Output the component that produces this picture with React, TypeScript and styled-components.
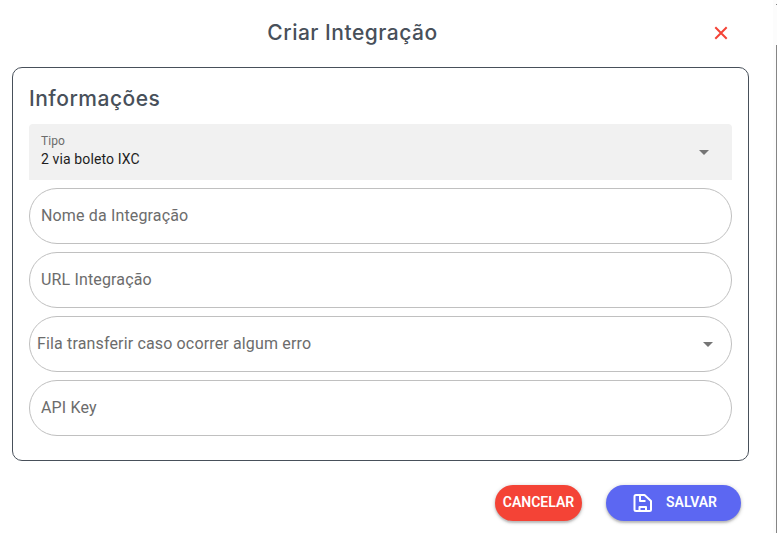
import React from "react";
import styled, { createGlobalStyle } from "styled-components";

const Global = createGlobalStyle`
  * { box-sizing: border-box; }
  body { margin: 0; background: #fff; font-family: Roboto, sans-serif; overflow: hidden; }
`;
const Page = styled.div`
  display: flex;
  width: 777px;
  height: 535px;
  background: #fff;
`;
const Dialog = styled.main`
  flex: 1;
  min-width: 0;
  padding: 0 24px 0 12px;
`;
const ScrollTrack = styled.div`
  width: 4px;
  height: 533px;
  padding-top: 4px;
  background: #fcfcfc;
  display: flex;
  flex-direction: column;
  align-items: flex-end;
`;
const ScrollArrow = styled.span`
  width: 1px;
  height: 1px;
  margin-bottom: 40px;
  background: #858585;
`;
const ScrollThumb = styled.span`
  width: 1px;
  flex: 1;
  background: #858585;
`;
const Header = styled.header`
  display: grid;
  grid-template-columns: 56px 1fr 56px;
  align-items: center;
  height: 67px;
  padding-bottom: 2px;
`;
const Heading = styled.h2`
  margin: 0;
  color: #48505a;
  font: 500 21px/32px Inter, sans-serif;
  letter-spacing: 0.5px;
`;
const Title = styled(Heading)`
  grid-column: 2;
  text-align: center;
  padding-right: 56px;
`;
const CloseButton = styled.button`
  border: 0;
  padding: 0;
  background: none;
  color: #f44336;
  display: flex;
  justify-content: center;
`;
const Card = styled.section`
  height: 394px;
  border: 1px solid #48505a;
  border-radius: 10px;
  padding: 15px 16px;
`;
const Fields = styled.div`
  display: grid;
  gap: 8px;
  margin-top: 9px;
`;
const FilledSelect = styled.div`
  height: 56px;
  display: flex;
  align-items: center;
  justify-content: space-between;
  padding: 0 16px 0 12px;
  border-radius: 4px 4px 0 0;
  background: #f1f1f1;
`;
const SelectText = styled.div`
  display: grid;
  padding-bottom: 4px;
`;
const SmallLabel = styled.span`
  color: #6c6c6c;
  font-size: 12px;
  line-height: 18px;
  letter-spacing: 0.1px;
`;
const Value = styled.span`
  color: #1d1d1d;
  font-size: 14px;
  line-height: 18px;
  letter-spacing: 0.12px;
`;
const Field = styled.div<{ $inset?: number }>`
  height: 56px;
  display: flex;
  align-items: center;
  justify-content: space-between;
  padding: 0 11px 2px ${(p) => p.$inset ?? 11}px;
  border: 1px solid #c0c0c0;
  border-radius: 28px;
  color: #6c6c6c;
  font-size: 16px;
  letter-spacing: 0.15px;
`;
const FieldCaret = styled.span`
  display: flex;
  padding-top: 2px;
`;
const Actions = styled.footer`
  display: flex;
  justify-content: flex-end;
  gap: 24px;
  padding: 24px 8px 0 0;
`;
const Button = styled.button<{ $color: string; $width: number }>`
  width: ${(p) => p.$width}px;
  height: 36px;
  display: flex;
  align-items: center;
  justify-content: center;
  gap: 12px;
  padding: 0 0 2px;
  border: 0;
  border-radius: 18px;
  background: ${(p) => p.$color};
  color: #fff;
  font: 600 14px/20px Roboto, sans-serif;
  box-shadow: 0 1px 4px rgba(0, 0, 0, 0.22), 0 2px 2px rgba(0, 0, 0, 0.16);
`;
const ButtonIcon = styled.span`
  display: flex;
  padding-top: 2px;
`;

const Caret = () => (
  <svg width="24" height="24" viewBox="0 0 24 24" fill="#757575"><path d="M7 10l5 5 5-5z" /></svg>
);

const SaveIcon = () => (
  <svg width="24" height="24" viewBox="0 0 24 24" fill="none" stroke="#fff" strokeWidth="2" strokeLinejoin="round">
    <path d="M6 4h8.5L21 10v8.5a1.5 1.5 0 0 1-1.5 1.5H6a1.5 1.5 0 0 1-1.5-1.5v-13A1.5 1.5 0 0 1 6 4z" />
    <path d="M10 4v6h5.5M9.5 20v-4h6.5v4" />
  </svg>
);

export default function App() {
  return (
    <>
      <Global />
      <Page>
        <Dialog>
          <Header>
            <Title>Criar Integração</Title>
            <CloseButton aria-label="Fechar">
              <svg width="14" height="14" viewBox="0 0 14 14" stroke="currentColor" strokeWidth="2">
                <path d="M1.3 1.3l11.4 11.4M12.7 1.3L1.3 12.7" />
              </svg>
            </CloseButton>
          </Header>
          <Card>
            <Heading>Informações</Heading>
            <Fields>
              <FilledSelect>
                <SelectText>
                  <SmallLabel>Tipo</SmallLabel>
                  <Value>2 via boleto IXC</Value>
                </SelectText>
                <Caret />
              </FilledSelect>
              <Field>Nome da Integração</Field>
              <Field>URL Integração</Field>
              <Field $inset={7}>
                Fila transferir caso ocorrer algum erro
                <FieldCaret><Caret /></FieldCaret>
              </Field>
              <Field>API Key</Field>
            </Fields>
          </Card>
          <Actions>
            <Button $color="#f44336" $width={87}>CANCELAR</Button>
            <Button $color="#5c67f2" $width={135}><ButtonIcon><SaveIcon /></ButtonIcon>SALVAR</Button>
          </Actions>
        </Dialog>
        <ScrollTrack><ScrollArrow /><ScrollThumb /></ScrollTrack>
      </Page>
    </>
  );
}
